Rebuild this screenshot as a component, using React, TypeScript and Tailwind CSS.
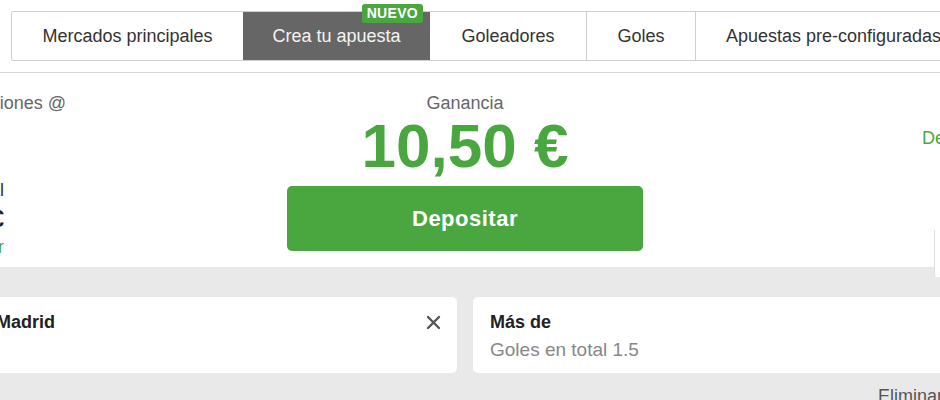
import React from "react";

const tabs = [
  { label: "Mercados principales", width: "w-[231px]" },
  { label: "Crea tu apuesta", width: "w-[187px]", active: true, badge: "NUEVO" },
  { label: "Goleadores", width: "w-[156px]" },
  { label: "Goles", width: "w-[109px]" },
  { label: "Apuestas pre-configuradas", width: "w-[276px]" },
];

function CloseIcon() {
  return (
    <svg width="15" height="15" viewBox="0 0 15 15" className="text-[#555]">
      <path d="M2 2 L13 13 M13 2 L2 13" stroke="currentColor" strokeWidth="2.4" strokeLinecap="round" />
    </svg>
  );
}

export default function App() {
  return (
    <div className="relative w-[940px] h-[400px] overflow-hidden bg-[#e9e9e9] font-['Liberation_Sans',Arial,sans-serif]">
      <div className="bg-white">
        {/* tabs */}
        <div className="h-[73px] pt-[11px] pl-[11px] flex border-b border-[#d6d6d6]">
          <div className="flex h-[50px] border border-[#cfcfcf] rounded-l-[2px] shrink-0">
            {tabs.map((t, i) => (
              <div
                key={t.label}
                className={`relative shrink-0 ${t.width} flex items-center justify-center text-[18px] whitespace-nowrap ${
                  t.active ? "bg-[#666666] text-[#f4f4f4]" : "text-[#333]"
                } ${i > 1 && !tabs[i - 1].active ? "border-l border-[#cfcfcf]" : ""}`}
              >
                {t.label}
                {t.badge && (
                  <span className="absolute top-[-8px] right-[7px] bg-[#4aa63f] text-white text-[14px] font-bold leading-[19px] px-[5px] rounded-[3px] tracking-[0.3px]">
                    {t.badge}
                  </span>
                )}
              </div>
            ))}
          </div>
        </div>

        {/* summary */}
        <div className="h-[194px] flex">
          <div className="w-[287px] shrink-0 pt-[20px]">
            <div className="w-[66px] flex flex-col items-end whitespace-nowrap">
              <div className="text-[18px] leading-[20px] text-[#666]">Cuotas combinaciones @</div>
            </div>
            <div className="w-[4px] flex flex-col items-end whitespace-nowrap">
              <div className="mt-[67px] text-[18px] leading-[20px] text-[#333]">Importe total</div>
              <div className="mt-[6px] text-[24px] leading-[26px] font-bold text-[#222]">10,00 €</div>
              <div className="mt-[5px] text-[18px] leading-[20px] text-[#4aa63f]">Modificar</div>
            </div>
          </div>

          <div className="w-[356px] shrink-0 flex flex-col items-center pt-[20px]">
            <div className="text-[18px] leading-[20px] text-[#666]">Ganancia</div>
            <div className="mt-[2px] text-[62px] leading-[62px] font-bold text-[#4aa63f]">10,50 €</div>
            <button className="mt-[9px] w-[356px] h-[65px] rounded-[5px] bg-[#4aa63f] text-white text-[22px] font-bold tracking-[0.5px]">
              Depositar
            </button>
          </div>

          <div className="flex-1 pl-[279px] pt-[54px] whitespace-nowrap overflow-hidden">
            <span className="text-[18px] leading-[20px] text-[#4aa63f]">Detalles</span>
          </div>
        </div>
      </div>

      <div className="absolute left-[934px] top-[230px] w-[20px] h-[47px] bg-white border-l border-[#e0e0e0] rounded-bl-[3px]" />

      {/* selections */}
      <div className="pt-[30px] flex gap-[16px]">
        <div className="ml-[-64px] w-[521px] h-[76px] shrink-0 bg-white rounded-[5px] pl-[17px] pr-[16px] pt-[15px] flex justify-between">
          <div className="text-[18px] leading-[20px] font-bold text-[#222] whitespace-nowrap">Real Madrid</div>
          <div className="pt-[3px]">
            <CloseIcon />
          </div>
        </div>
        <div className="w-[500px] h-[76px] shrink-0 bg-white rounded-[5px] pl-[17px] pt-[15px]">
          <div className="text-[18px] leading-[20px] font-bold text-[#222]">Más de</div>
          <div className="mt-[8px] text-[19px] leading-[20px] text-[#888]">Goles en total 1.5</div>
        </div>
      </div>

      <div className="pl-[878px] pt-[13px] text-[18px] leading-[20px] text-[#555] whitespace-nowrap">Eliminar todo</div>
    </div>
  );
}
